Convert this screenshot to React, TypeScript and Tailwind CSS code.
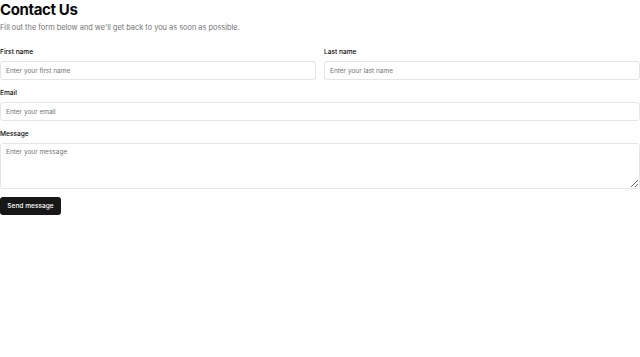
import React from "react";

export default function App() {
  const inputCls =
    "block h-[19px] w-full rounded-[3px] border border-[#e5e5e5] bg-white px-[5px] text-[6.5px] text-[#0a0a0a] placeholder:text-[#737373] outline-none";
  const labelCls = "text-[6.6px] leading-[8px] font-medium text-[#0a0a0a]";
  return (
    <div className="w-[640px] h-[357px] bg-white" style={{ fontFamily: "Inter, 'Noto Sans', sans-serif" }}>
      <h1 className="text-[15px] leading-[20px] font-bold tracking-tight text-[#0a0a0a]">Contact Us</h1>
      <p className="mt-[3px] text-[7.4px] leading-[10px] text-[#737373]">
        Fill out the form below and we'll get back to you as soon as possible.
      </p>
      <form className="mt-[15px] flex flex-col gap-[9px]">
        <div className="grid grid-cols-2 gap-[8px]">
          <div className="flex flex-col gap-[5px]">
            <label className={labelCls}>First name</label>
            <input className={inputCls} placeholder="Enter your first name" />
          </div>
          <div className="flex flex-col gap-[5px]">
            <label className={labelCls}>Last name</label>
            <input className={inputCls} placeholder="Enter your last name" />
          </div>
        </div>
        <div className="flex flex-col gap-[5px]">
          <label className={labelCls}>Email</label>
          <input className={inputCls} placeholder="Enter your email" />
        </div>
        <div className="flex flex-col gap-[5px]">
          <label className={labelCls}>Message</label>
          <textarea
            className="block h-[46px] w-full rounded-[3px] border border-[#e5e5e5] bg-white px-[5px] py-[4px] text-[6.5px] text-[#0a0a0a] placeholder:text-[#737373] outline-none"
            placeholder="Enter your message"
          />
        </div>
        <div className="-mt-px flex">
          <button
            type="button"
            className="h-[18px] w-[61px] rounded-[3px] bg-[#171717] text-white text-[6.6px] leading-[18px] font-medium"
          >
            Send message
          </button>
        </div>
      </form>
    </div>
  );
}
